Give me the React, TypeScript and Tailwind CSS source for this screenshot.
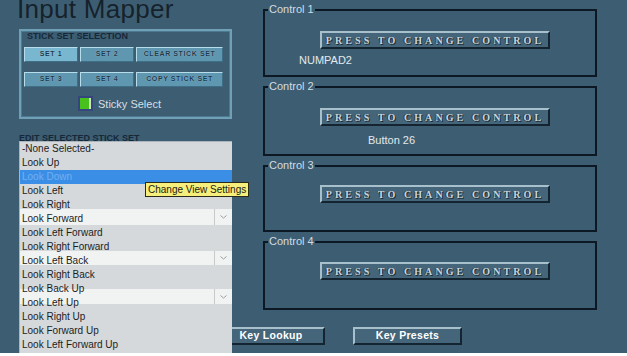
import React from "react";

const items = [
  "-None Selected-",
  "Look Up",
  "Look Down",
  "Look Left",
  "Look Right",
  "Look Forward",
  "Look Left Forward",
  "Look Right Forward",
  "Look Left Back",
  "Look Right Back",
  "Look Back Up",
  "Look Left Up",
  "Look Right Up",
  "Look Forward Up",
  "Look Left Forward Up",
];

const controls = [
  { label: "Control 1", h: "h-[68px]", mt: "mt-[20px]", value: "NUMPAD2", vx: "ml-[34px]", vmt: "mt-[5px]" },
  { label: "Control 2", h: "h-[70px]", mt: "mt-[20px]", value: "Button 26", vx: "ml-[103px]", vmt: "mt-[8px]" },
  { label: "Control 3", h: "h-[67px]", mt: "mt-[18px]", value: "", vx: "", vmt: "" },
  { label: "Control 4", h: "h-[69px]", mt: "mt-[19px]", value: "", vx: "", vmt: "" },
];

function SetButton({ label, w, active }: { label: string; w: string; active?: boolean }) {
  return (
    <div
      className={`${w} h-[15px] flex items-center justify-center whitespace-nowrap overflow-hidden border border-t-[#b7dcea] border-l-[#b7dcea] border-r-[#3f6f86] border-b-[#3f6f86] ${
        active ? "bg-[#79b6d0]" : "bg-[#5f96b0]"
      } text-[7px] font-bold tracking-[0.6px] text-[#1c3a4b] [text-shadow:0_0_1px_#a9d2e4]`}
    >
      {label}
    </div>
  );
}

function BevelButton({ children, w, className = "" }: { children: React.ReactNode; w: string; className?: string }) {
  return (
    <div
      className={`${w} h-[18px] flex items-center justify-center bg-[#44657a] border-t-2 border-l-2 border-t-[#a8bfcc] border-l-[#a8bfcc] border-r-2 border-b-2 border-r-[#142430] border-b-[#142430] ${className}`}
    >
      {children}
    </div>
  );
}

function Chevron() {
  return (
    <svg width="7" height="4" viewBox="0 0 7 4">
      <path d="M0.5 0.5 L3.5 3 L6.5 0.5" fill="none" stroke="#9aa0a4" strokeWidth="1" />
    </svg>
  );
}

function Band({ top, h }: { top: string; h: string }) {
  return (
    <div className={`absolute left-0 right-0 ${top} ${h} flex bg-[#f1f3f3]`}>
      <div className="flex-1" />
      <div className="w-[18px] border-l border-[#c6cacc] flex items-center justify-center">
        <Chevron />
      </div>
    </div>
  );
}

export default function App() {
  return (
    <div className="relative w-[627px] h-[353px] overflow-hidden bg-[#3d5e72] font-['Liberation_Sans',Arial,sans-serif]">
      <div className="flex">
        {/* Left column */}
        <div className="w-[263px] pl-[19px] shrink-0">
          <div className="-mt-[4px] -ml-[2px] text-[26px] leading-[26px] text-[#15222c] tracking-[0.3px]">
            Input Mapper
          </div>
          <div className="mt-[7px] w-[213px] h-[90px] border-2 border-[#6fa0b6] shadow-[inset_0_0_0_1px_#4d7a90]">
            <div className="pl-[6px] text-[9px] leading-[10px] font-bold text-[#15283a]">STICK SET SELECTION</div>
            <div className="pl-[3px] mt-[6px] flex gap-[2px]">
              <SetButton label="SET 1" w="w-[54px]" active />
              <SetButton label="SET 2" w="w-[54px]" />
              <SetButton label="CLEAR STICK SET" w="w-[87px]" />
            </div>
            <div className="pl-[3px] mt-[10px] flex gap-[2px]">
              <SetButton label="SET 3" w="w-[54px]" />
              <SetButton label="SET 4" w="w-[54px]" />
              <SetButton label="COPY STICK SET" w="w-[87px]" />
            </div>
            <div className="mt-[9px] ml-[57px] flex items-center gap-[5px]">
              <div className="w-[15px] h-[15px] bg-[#35457e] p-[2px]">
                <div className="w-full h-full bg-[#49c11d] border-r-2 border-[#c9e8b8]" />
              </div>
              <span className="text-[11px] leading-[14px] text-[#d6dfe4]">Sticky Select</span>
            </div>
          </div>
          <div className="mt-[14px] text-[9px] leading-[10px] font-bold text-[#15283a]">EDIT SELECTED STICK SET</div>
        </div>

        {/* Right column */}
        <div className="pt-[9px] flex flex-col gap-[9px] w-[334px]">
          {controls.map((c) => (
            <div key={c.label} className={`relative ${c.h} border-2 border-[#0c1824]`}>
              <div className="absolute -top-[8px] left-[3px] px-[1px] bg-[#3d5e72] text-[11px] leading-[12px] text-[#d3dce1]">
                {c.label}
              </div>
              <BevelButton w="w-[230px]" className={`${c.mt} ml-[55px]`}>
                <span className="font-['Liberation_Serif',serif] font-bold text-[10px] tracking-[3.1px] text-[#c9d4da] [text-shadow:1px_1px_0_#1a2c38,-1px_0_0_#2a4252]">
                  PRESS TO CHANGE CONTROL
                </span>
              </BevelButton>
              {c.value && (
                <div className={`${c.vx} ${c.vmt} text-[11px] leading-[12px] text-[#e3e9ec]`}>{c.value}</div>
              )}
            </div>
          ))}
        </div>
      </div>

      {/* Bottom buttons */}
      <div className="mt-[17px] pl-[217px] flex gap-[28px]">
        <BevelButton w="w-[108px]">
          <span className="text-[10.5px] font-bold text-white tracking-[0.3px]">Key Lookup</span>
        </BevelButton>
        <BevelButton w="w-[109px]">
          <span className="text-[10.5px] font-bold text-white tracking-[0.3px]">Key Presets</span>
        </BevelButton>
      </div>

      {/* Open dropdown list */}
      <div className="absolute left-[19px] top-[141px] w-[213px] h-[212px] bg-[#d5d9db] border-l border-t border-[#aab4ba]">
        <Band top="top-[67px]" h="h-[16px]" />
        <Band top="top-[109px]" h="h-[14px]" />
        <Band top="top-[147px]" h="h-[15px]" />
        <div className="relative">
          {items.map((it, i) => (
            <div
              key={it}
              className={`h-[14px] leading-[14px] pl-[2px] text-[10px] ${
                i === 2 ? "bg-[#3b8ee6] text-[#6fb0f2]" : "text-[#1d1d1d]"
              }`}
            >
              {it}
            </div>
          ))}
        </div>
      </div>

      {/* Tooltip */}
      <div className="absolute left-[145px] top-[182px] h-[15px] px-[2px] bg-[#f6ef7c] border border-[#2a2a18] text-[10px] leading-[13px] text-[#22220e] whitespace-nowrap">
        Change View Settings
      </div>
    </div>
  );
}
